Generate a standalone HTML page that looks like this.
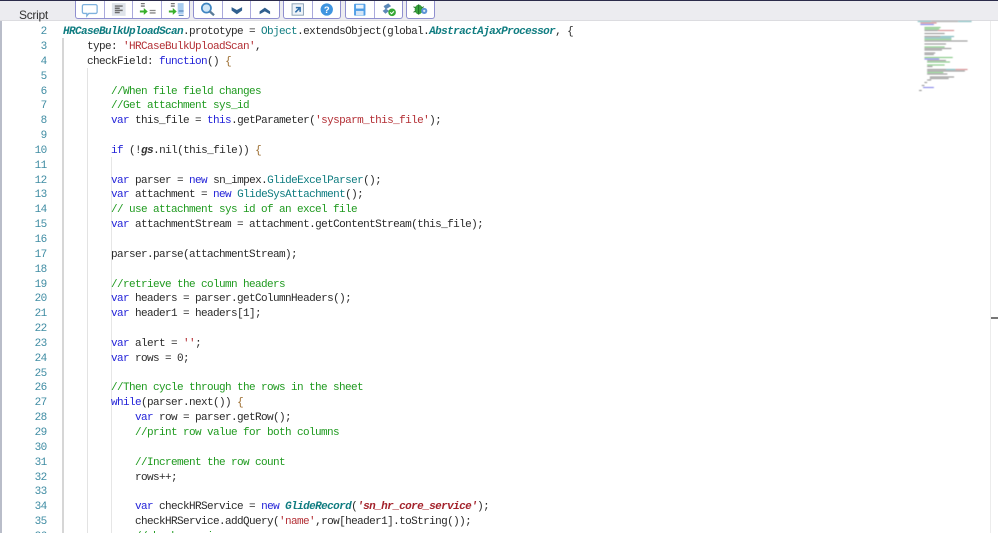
<!DOCTYPE html>
<html>
<head>
<meta charset="utf-8">
<style>
html,body{margin:0;padding:0;background:#fff;width:998px;height:533px;overflow:hidden;}
body{position:relative;font-family:"Liberation Sans",sans-serif;}
#bar{position:absolute;left:0;top:0;width:998px;height:21px;background:#ececf0;border-bottom:1px solid #dcdce0;box-sizing:border-box;}
#topline{position:absolute;left:0;top:0;width:998px;height:1px;background:#2b2b4a;}
#label{position:absolute;left:19px;top:8px;font-size:12px;letter-spacing:-.3px;line-height:15px;color:#333;}
.grp{position:absolute;top:1px;height:18px;background:#fff;border:1px solid #8f8fcf;border-top:0;box-sizing:border-box;border-radius:0 0 3px 3px;display:flex;}
.btn{height:17px;border-right:1px solid #a9a9dc;box-sizing:border-box;flex:1;position:relative;}
.btn:last-child{border-right:0;}
.btn svg{position:absolute;left:0;top:0;width:100%;height:100%;}
#left{position:absolute;left:0;top:21px;width:2px;height:512px;background:#b9bdc9;}
#code{position:absolute;left:0;top:25.2px;width:900px;height:508px;overflow:hidden;font-family:"Liberation Mono",monospace;font-size:11px;letter-spacing:-.6px;line-height:14.85px;color:#2a2a2a;}
.l{height:14.85px;position:relative;white-space:pre;}
.n{position:absolute;left:0;width:46.6px;text-align:right;color:#3f8ca3;}
.t{position:absolute;left:63px;}
.k{color:#2323d8;}.c{color:#1f9a1f;}.s{color:#b32f35;}.g{color:#0f7c80;}
.i{font-style:italic;font-weight:bold;color:#0f7c80;}
.gs{font-style:italic;font-weight:bold;color:#333;}
.si{font-style:italic;font-weight:bold;color:#a3212a;}
.p{color:#9a6a2c;}
.guide{position:absolute;width:1px;background:#d4d4d4;}
#rline{position:absolute;left:990px;top:21px;width:1px;height:512px;background:#ececec;}
#mark{position:absolute;left:991px;top:317px;width:7px;height:2px;background:#777;}
#mini{position:absolute;left:915px;top:20px;filter:blur(.55px);}
</style>
</head>
<body>
<div id="bar"></div>
<div id="topline"></div>
<div id="label">Script</div>

<div class="grp" style="left:75px;width:115px;">
 <div class="btn"><svg viewBox="0 0 28 17"><path d="M8 3.500h12a1.500 1.500 0 0 1 1.500 1.500v6a1.500 1.500 0 0 1-1.500 1.500h-7l-2 2.500v-2.500H8a1.500 1.500 0 0 1-1.500-1.500V5A1.500 1.500 0 0 1 8 3.500z" fill="#fff" stroke="#7fb2de" stroke-width="1.300"/></svg></div>
 <div class="btn"><svg viewBox="0 0 28 17"><rect x="7" y="2" width="14" height="13" fill="#dfe4ea"/><path d="M10 5h8M10 7.200h5M10 9.400h8M10 11.600h5" stroke="#6d6d6d" stroke-width="1.500"/></svg></div>
 <div class="btn"><svg viewBox="0 0 28 17"><path d="M8 2.500h4M8 5h4" stroke="#777" stroke-width="1.300"/><path d="M7 9.500h4V7l4 3.500-4 3.500v-2.500H7z" fill="#38b02a"/><path d="M17 9.500h6M17 12h6" stroke="#888" stroke-width="1.300"/></svg></div>
 <div class="btn"><svg viewBox="0 0 28 17"><path d="M9 2.500h4M9 5h4" stroke="#777" stroke-width="1.300"/><path d="M7 9.500h4V7l4 3.500-4 3.500v-2.500H7z" fill="#38b02a"/><rect x="16" y="2" width="6" height="11" fill="#a9cdf0"/><path d="M17 14.500h5M17 10h5" stroke="#5d88bb" stroke-width="1.200"/></svg></div>
</div>

<div class="grp" style="left:193px;width:87px;">
 <div class="btn"><svg viewBox="0 0 29 17"><circle cx="13" cy="7" r="4.800" fill="#cfe6f7" stroke="#3f86c2" stroke-width="1.800"/><path d="M16.500 10.500l4.500 4" stroke="#5b7c99" stroke-width="2.500"/></svg></div>
 <div class="btn"><svg viewBox="0 0 29 17"><path d="M9 6l5.500 3 5.500-3v3.500l-5.500 4-5.500-4z" fill="#31608f"/></svg></div>
 <div class="btn"><svg viewBox="0 0 29 17"><path d="M9 10.500l5.500-4 5.500 4V13.500l-5.500-3-5.500 3z" fill="#31608f"/></svg></div>
</div>

<div class="grp" style="left:283px;width:58px;">
 <div class="btn"><svg viewBox="0 0 29 17"><rect x="8.500" y="2.500" width="12" height="12" fill="#eef3f8" stroke="#8aa0b5" stroke-width="1"/><path d="M12 11.500l4-4M12.500 6.500h4.500v4.500" stroke="#2c6ca8" stroke-width="1.600" fill="none"/></svg></div>
 <div class="btn"><svg viewBox="0 0 29 17"><circle cx="14.500" cy="8.500" r="6.500" fill="#3f95e0"/><text x="14.500" y="12" font-size="10" font-weight="bold" text-anchor="middle" fill="#fff" font-family="Liberation Sans">?</text></svg></div>
</div>

<div class="grp" style="left:345px;width:58px;">
 <div class="btn"><svg viewBox="0 0 29 17"><rect x="8.500" y="2.500" width="12" height="12.500" rx="1" fill="#4f9ee6"/><rect x="10.500" y="3.500" width="8" height="4" fill="#e9f3fc"/><rect x="10.500" y="10" width="8" height="4.500" fill="#d5e6f6"/></svg></div>
 <div class="btn"><svg viewBox="0 0 29 17"><path d="M9 5l5-3 3 3-5 3 3 2-4 3-3-3 3-2z" fill="#5d89b8"/><circle cx="18" cy="11.500" r="4" fill="#35a835"/><path d="M16 11.500l1.500 1.500 2.500-2.500" stroke="#fff" stroke-width="1.100" fill="none"/></svg></div>
</div>

<div class="grp" style="left:406px;width:29px;">
 <div class="btn"><svg viewBox="0 0 29 17"><ellipse cx="12.500" cy="8.500" rx="4.300" ry="5.200" fill="#37a13c"/><path d="M12.500 3v11M7 5.500l2.500 1.500M7 11.500l2.500-1.500M18 5.500l-2.500 1.500" stroke="#1f6e26" stroke-width="1"/><circle cx="18.500" cy="10" r="3.300" fill="#5b93d6"/><circle cx="18.500" cy="10" r="1.200" fill="#dbe9f7"/></svg></div>
</div>

<div id="left"></div>
<div class="guide" style="left:62px;top:38px;height:495px;width:2px;background:#d6d6d6"></div>
<div class="guide" style="left:87px;top:68px;height:465px;background:#e3e3e3"></div>
<div class="guide" style="left:111px;top:157px;height:376px;background:#e6e6e6"></div>

<div id="code"><div class="l"><span class="n">2</span><span class="t"><span class="i">HRCaseBulkUploadScan</span>.prototype = <span class="g">Object</span>.extendsObject(global.<span class="i">AbstractAjaxProcessor</span>, {</span></div><div class="l"><span class="n">3</span><span class="t">    type: <span class="s">'HRCaseBulkUploadScan'</span>,</span></div><div class="l"><span class="n">4</span><span class="t">    checkField: <span class="k">function</span>() <span class="p">{</span></span></div><div class="l"><span class="n">5</span></div><div class="l"><span class="n">6</span><span class="t">        <span class="c">//When file field changes</span></span></div><div class="l"><span class="n">7</span><span class="t">        <span class="c">//Get attachment sys_id</span></span></div><div class="l"><span class="n">8</span><span class="t">        <span class="k">var</span> this_file = <span class="k">this</span>.getParameter(<span class="s">'sysparm_this_file'</span>);</span></div><div class="l"><span class="n">9</span></div><div class="l"><span class="n">10</span><span class="t">        <span class="k">if</span> (!<span class="gs">gs</span>.nil(this_file)) <span class="p">{</span></span></div><div class="l"><span class="n">11</span></div><div class="l"><span class="n">12</span><span class="t">        <span class="k">var</span> parser = <span class="k">new</span> sn_impex.<span class="g">GlideExcelParser</span>();</span></div><div class="l"><span class="n">13</span><span class="t">        <span class="k">var</span> attachment = <span class="k">new</span> <span class="g">GlideSysAttachment</span>();</span></div><div class="l"><span class="n">14</span><span class="t">        <span class="c">// use attachment sys id of an excel file</span></span></div><div class="l"><span class="n">15</span><span class="t">        <span class="k">var</span> attachmentStream = attachment.getContentStream(this_file);</span></div><div class="l"><span class="n">16</span></div><div class="l"><span class="n">17</span><span class="t">        parser.parse(attachmentStream);</span></div><div class="l"><span class="n">18</span></div><div class="l"><span class="n">19</span><span class="t">        <span class="c">//retrieve the column headers</span></span></div><div class="l"><span class="n">20</span><span class="t">        <span class="k">var</span> headers = parser.getColumnHeaders();</span></div><div class="l"><span class="n">21</span><span class="t">        <span class="k">var</span> header1 = headers[1];</span></div><div class="l"><span class="n">22</span></div><div class="l"><span class="n">23</span><span class="t">        <span class="k">var</span> alert = <span class="s">''</span>;</span></div><div class="l"><span class="n">24</span><span class="t">        <span class="k">var</span> rows = 0;</span></div><div class="l"><span class="n">25</span></div><div class="l"><span class="n">26</span><span class="t">        <span class="c">//Then cycle through the rows in the sheet</span></span></div><div class="l"><span class="n">27</span><span class="t">        <span class="k">while</span>(parser.next()) <span class="p">{</span></span></div><div class="l"><span class="n">28</span><span class="t">            <span class="k">var</span> row = parser.getRow();</span></div><div class="l"><span class="n">29</span><span class="t">            <span class="c">//print row value for both columns</span></span></div><div class="l"><span class="n">30</span></div><div class="l"><span class="n">31</span><span class="t">            <span class="c">//Increment the row count</span></span></div><div class="l"><span class="n">32</span><span class="t">            rows++;</span></div><div class="l"><span class="n">33</span></div><div class="l"><span class="n">34</span><span class="t">            <span class="k">var</span> checkHRService = <span class="k">new</span> <span class="i">GlideRecord</span>(<span class="si">'sn_hr_core_service'</span>);</span></div><div class="l"><span class="n">35</span><span class="t">            checkHRService.addQuery(<span class="s">'name'</span>,row[header1].toString());</span></div><div class="l"><span class="n">36</span><span class="t">            <span class="c">//check service name</span></span></div></div>

<svg id="mini" width="62" height="72" viewBox="0 0 46 72" preserveAspectRatio="none">
 <g opacity=".6">
 <rect x="2" y="1" width="10" height="1" fill="#0f7c80"/><rect x="12" y="1" width="20" height="1" fill="#555"/><rect x="32" y="1" width="10" height="1" fill="#0f7c80"/>
 <rect x="4" y="2.500" width="12" height="1" fill="#b32f35"/>
 <rect x="4" y="4" width="10" height="1" fill="#2323d8"/>
 <rect x="7" y="7" width="12" height="1" fill="#1f9a1f"/>
 <rect x="7" y="8.500" width="11" height="1" fill="#1f9a1f"/>
 <rect x="7" y="10" width="10" height="1" fill="#444"/><rect x="17" y="10" width="12" height="1" fill="#b32f35"/>
 <rect x="7" y="13" width="15" height="1" fill="#444"/>
 <rect x="7" y="16" width="12" height="1" fill="#444"/><rect x="19" y="16" width="10" height="1" fill="#0f7c80"/>
 <rect x="7" y="17.500" width="20" height="1" fill="#0f7c80"/>
 <rect x="7" y="19" width="20" height="1" fill="#1f9a1f"/>
 <rect x="7" y="20.500" width="32" height="1" fill="#444"/>
 <rect x="7" y="23.500" width="16" height="1" fill="#444"/>
 <rect x="7" y="26.500" width="15" height="1" fill="#1f9a1f"/>
 <rect x="7" y="28" width="20" height="1" fill="#444"/>
 <rect x="7" y="29.500" width="13" height="1" fill="#444"/>
 <rect x="7" y="32.500" width="8" height="1" fill="#444"/>
 <rect x="7" y="34" width="7" height="1" fill="#444"/>
 <rect x="7" y="37" width="21" height="1" fill="#1f9a1f"/>
 <rect x="7" y="38.500" width="11" height="1" fill="#2323d8"/>
 <rect x="9" y="40" width="14" height="1" fill="#444"/>
 <rect x="9" y="41.500" width="17" height="1" fill="#1f9a1f"/>
 <rect x="9" y="44.500" width="13" height="1" fill="#1f9a1f"/>
 <rect x="9" y="46" width="4" height="1" fill="#444"/>
 <rect x="9" y="49" width="14" height="1" fill="#444"/><rect x="23" y="49" width="7" height="1" fill="#0f7c80"/><rect x="30" y="49" width="9" height="1" fill="#b32f35"/>
 <rect x="9" y="50.500" width="28" height="1" fill="#444"/>
 <rect x="9" y="52" width="12" height="1" fill="#1f9a1f"/>
 <rect x="9" y="53.500" width="15" height="1" fill="#444"/>
 <rect x="11" y="56.500" width="18" height="1" fill="#444"/>
 <rect x="11" y="58" width="14" height="1" fill="#444"/>
 <rect x="9" y="59.500" width="3" height="1" fill="#444"/>
 <rect x="7" y="62" width="2" height="1" fill="#444"/>
 <rect x="5" y="65" width="2" height="1" fill="#444"/>
 <rect x="6" y="67" width="8" height="1" fill="#2323d8"/>
 <rect x="3" y="70" width="2" height="1" fill="#444"/>
 </g>
</svg>

<div id="rline"></div>
<div id="mark"></div>
</body>
</html>
